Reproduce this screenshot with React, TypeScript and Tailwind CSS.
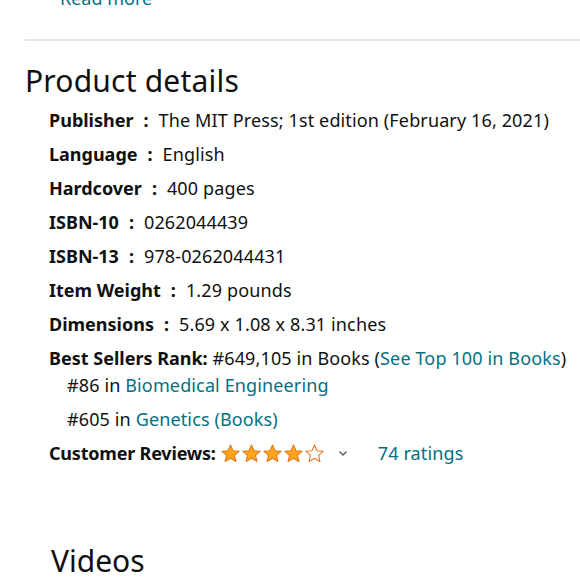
import React from 'react';

const Star = ({ filled }: { filled: boolean }) => (
  <svg width="21" height="21" viewBox="0 0 24 24" className="shrink-0">
    <path
      d="M12 2.2l2.9 6.6 7.1.6-5.4 4.7 1.6 7-6.2-3.7-6.2 3.7 1.6-7L2 9.4l7.1-.6z"
      fill={filled ? '#ffa41c' : '#ffffff'}
      stroke="#de7921"
      strokeWidth="1.2"
      strokeLinejoin="round"
    />
  </svg>
);

const details = [
  { label: 'Publisher', value: 'The MIT Press; 1st edition (February 16, 2021)' },
  { label: 'Language', value: 'English' },
  { label: 'Hardcover', value: '400 pages' },
  { label: 'ISBN-10', value: '0262044439' },
  { label: 'ISBN-13', value: '978-0262044431' },
  { label: 'Item Weight', value: '1.29 pounds' },
  { label: 'Dimensions', value: '5.69 x 1.08 x 8.31 inches' },
];

export default function App() {
  return (
    <div
      className="w-[580px] h-[580px] overflow-hidden bg-white text-[#0f1111]"
      style={{ fontFamily: '"Noto Sans", "Open Sans", sans-serif' }}
    >
      <div className="-mt-[14px] pl-[60px] h-[31px] text-[18px] leading-[24px] text-[#007185]">Read more</div>

      <div className="ml-[25px] mt-[22px] h-[2px] bg-[#e7e7e7]" />

      <h2 className="pl-[25px] mt-[20px] text-[30px] leading-[40px] font-normal tracking-[0.2px]">Product details</h2>

      <ul className="pl-[49px] mt-[2px] text-[18px] leading-[34px]">
        {details.map((d) => (
          <li key={d.label} className="whitespace-nowrap">
            <span className="font-bold">{d.label}</span>
            <span className="font-bold mx-[10px]">:</span>
            <span className="tracking-[0.13px]">{d.value}</span>
          </li>
        ))}
        <li className="whitespace-nowrap tracking-[0.13px]">
          <span className="font-bold tracking-normal">Best Sellers Rank:</span> #649,105 in Books (
          <span className="text-[#007185]">See Top 100 in Books</span>)
          <ul className="pl-[18px] -mt-[7px]">
            <li>
              #86 in <span className="text-[#007185]">Biomedical Engineering</span>
            </li>
            <li>
              #605 in <span className="text-[#007185]">Genetics (Books)</span>
            </li>
          </ul>
        </li>
        <li className="flex items-center whitespace-nowrap">
          <span className="font-bold tracking-[-0.2px]">Customer Reviews:</span>
          <span className="flex ml-[4px]">
            <Star filled />
            <Star filled />
            <Star filled />
            <Star filled />
            <Star filled={false} />
          </span>
          <svg width="12" height="12" viewBox="0 0 12 12" className="ml-[12px]">
            <path d="M2.5 4.5L6 8l3.5-3.5" fill="none" stroke="#565959" strokeWidth="1.3" />
          </svg>
          <span className="ml-[29px] text-[#007185] tracking-[0.13px]">74 ratings</span>
        </li>
      </ul>

      <h2 className="pl-[51px] mt-[71px] text-[30px] leading-[40px] font-normal">Videos</h2>
    </div>
  );
}
